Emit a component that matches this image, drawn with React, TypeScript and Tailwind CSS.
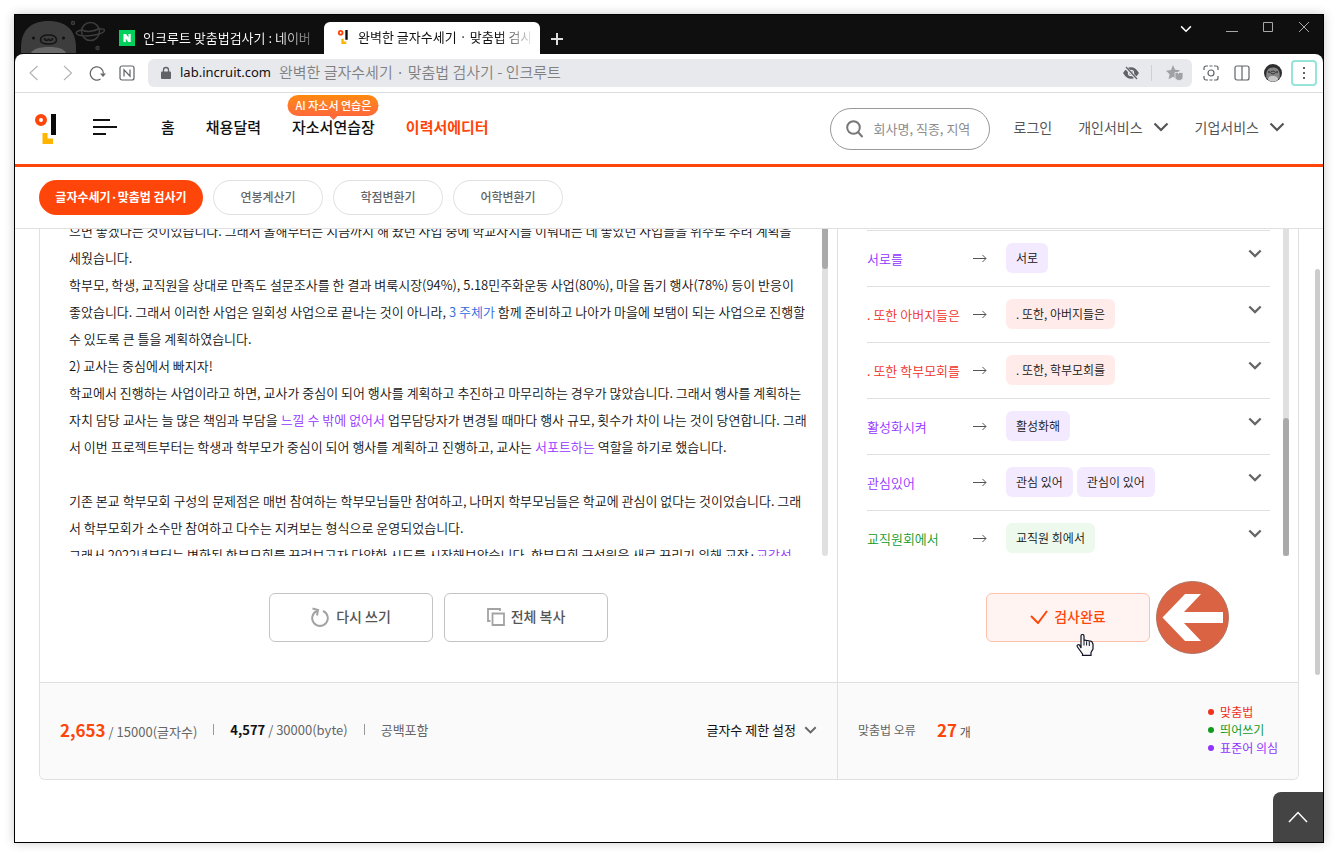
import React from "react";

type Tone = "red" | "purple" | "green";

const wordTone: Record<Tone, string> = {
  red: "text-[#f0311f]",
  purple: "text-[#9333ff]",
  green: "text-[#109a1e]",
};

const chipTone: Record<Tone, string> = {
  red: "bg-[#ffebe9]",
  purple: "bg-[#f3eaff]",
  green: "bg-[#edf9ec]",
};

const dotTone: Record<Tone, string> = {
  red: "bg-[#f0311f]",
  purple: "bg-[#9333ff]",
  green: "bg-[#109a1e]",
};

const corrections: { word: string; tone: Tone; fixes: string[] }[] = [
  { word: "서로를", tone: "purple", fixes: ["서로"] },
  { word: ". 또한 아버지들은", tone: "red", fixes: [". 또한, 아버지들은"] },
  { word: ". 또한 학부모회를", tone: "red", fixes: [". 또한, 학부모회를"] },
  { word: "활성화시켜", tone: "purple", fixes: ["활성화해"] },
  { word: "관심있어", tone: "purple", fixes: ["관심 있어", "관심이 있어"] },
  { word: "교직원회에서", tone: "green", fixes: ["교직원 회에서"] },
];

const legend: { label: string; tone: Tone }[] = [
  { label: "맞춤법", tone: "red" },
  { label: "띄어쓰기", tone: "green" },
  { label: "표준어 의심", tone: "purple" },
];

const essay: React.ReactNode[] = [
  "으면 좋겠다는 것이었습니다. 그래서 올해부터는 지금까지 해 왔던 사업 중에 학교자치를 이뤄내는 데 좋았던 사업들을 위주로 추려 계획을",
  "세웠습니다.",
  "학부모, 학생, 교직원을 상대로 만족도 설문조사를 한 결과 벼룩시장(94%), 5.18민주화운동 사업(80%), 마을 돕기 행사(78%) 등이 반응이",
  <>
    좋았습니다. 그래서 이러한 사업은 일회성 사업으로 끝나는 것이 아니라, <span className="text-[#2f6be0]">3 주체가</span> 함께
    준비하고 나아가 마을에 보탬이 되는 사업으로 진행할
  </>,
  "수 있도록 큰 틀을 계획하였습니다.",
  "2) 교사는 중심에서 빠지자!",
  "학교에서 진행하는 사업이라고 하면, 교사가 중심이 되어 행사를 계획하고 추진하고 마무리하는 경우가 많았습니다. 그래서 행사를 계획하는",
  <>
    자치 담당 교사는 늘 많은 책임과 부담을 <span className="text-[#9333ff]">느낄 수 밖에 없어서</span> 업무담당자가 변경될 때마다
    행사 규모, 횟수가 차이 나는 것이 당연합니다. 그래
  </>,
  <>
    서 이번 프로젝트부터는 학생과 학부모가 중심이 되어 행사를 계획하고 진행하고, 교사는{" "}
    <span className="text-[#9333ff]">서포트하는</span> 역할을 하기로 했습니다.
  </>,
  "\u00a0",
  "기존 본교 학부모회 구성의 문제점은 매번 참여하는 학부모님들만 참여하고, 나머지 학부모님들은 학교에 관심이 없다는 것이었습니다. 그래",
  "서 학부모회가 소수만 참여하고 다수는 지켜보는 형식으로 운영되었습니다.",
  <>
    그래서 2022년부터는 변화된 학부모회를 꾸려보고자 다양한 시도를 시작해보았습니다. 학부모회 구성원을 새로 꾸리기 위해 교장·
    <span className="text-[#9333ff]">교감선</span>
  </>,
];

function Chevron({ className, width = 2 }: { className: string; width?: number }) {
  return (
    <svg viewBox="0 0 16 10" className={className} fill="none" stroke="currentColor" strokeWidth={width} aria-hidden="true">
      <path d="M1.500 1.500 8 8l6.500-6.500" />
    </svg>
  );
}

function WhaleMascot() {
  return (
    <svg viewBox="0 0 92 38" className="h-[38px] w-[92px]" aria-hidden="true">
      <path d="M0 38V33C0 15 10 6 27.500 6S55 15 55 33v5z" fill="#3d3d3d" />
      <path d="M10 38c2-4 8-6 18-6s15 2 17 6z" fill="#6a6a6a" />
      <circle cx="12.500" cy="23" r="1.500" fill="#101010" />
      <circle cx="42.500" cy="23" r="1.500" fill="#101010" />
      <path
        d="M19.500 25c0-3 3-5 8-5s8 2 8 5-3 4-8 4-8-1-8-4zM23.500 23c0 3 4 3 4 .5 0 2.500 4 2.500 4-.5"
        fill="none"
        stroke="#151515"
        strokeWidth="1.500"
      />
      <g fill="none" stroke="#3d3d3d" strokeWidth="1.500">
        <circle cx="69.500" cy="16.500" r="9" />
        <path d="M60.500 15c-4 1-6 2-5 3.500 1 2 8 3 15 2s13-3 13-5-2-1.500-5-1.500" />
        <path d="M61 15c5 2.500 12 1.500 17-1.500" />
        <circle cx="52" cy="8" r="1.500" />
        <circle cx="76.500" cy="33" r="1.500" />
      </g>
    </svg>
  );
}

function IncruitMark({ className }: { className: string }) {
  return (
    <svg viewBox="0 0 22 30" className={className} aria-hidden="true">
      <circle cx="6" cy="6" r="4" fill="none" stroke="#ff460a" strokeWidth="4" />
      <path d="M16 0h5v21h-5z" fill="#0a0a0a" />
      <path d="M7.500 19h5v5.500H18V30H7.500z" fill="#ffb400" />
    </svg>
  );
}

function TitleBar() {
  return (
    <div className="flex h-[39px] items-stretch pl-[6px] text-[13px]">
      <WhaleMascot />
      <div className="flex w-[211px] items-center gap-2 pt-[6px] pl-[6px] text-white">
        <svg viewBox="0 0 16 16" className="mt-px size-4 shrink-0" aria-hidden="true">
          <path d="M0 0h16v16H0z" fill="#03cf5d" />
          <path d="M4.500 4h2.500l2.500 3.600V4h2.200v8H9.300L6.800 8.400V12H4.500z" fill="#fff" />
        </svg>
        <span className="w-[171px] overflow-hidden bg-linear-to-r from-white from-80% to-[#555] bg-clip-text whitespace-nowrap text-transparent">
          인크루트 맞춤법검사기 : 네이버
        </span>
      </div>
      <div className="mt-[7px] flex w-[216px] items-center gap-2 rounded-t-md bg-white pb-[2px] pl-3">
        <IncruitMark className="h-[14px] w-[14px] shrink-0" />
        <span className="w-[172px] overflow-hidden bg-linear-to-r from-[#111] from-80% to-[#ddd] bg-clip-text whitespace-nowrap text-transparent">
          완벽한 글자수세기 · 맞춤법 검사기
        </span>
      </div>
      <button type="button" aria-label="새 탭" className="ml-[10px] pt-2 text-[#ddd]">
        <svg viewBox="0 0 14 14" className="size-[14px]" stroke="currentColor" strokeWidth="2" aria-hidden="true">
          <path d="M7 1v12M1 7h12" />
        </svg>
      </button>
      <div className="ml-auto flex items-start gap-[34px] pt-[6px] pr-[13px] text-[#a8a8a8]">
        <button type="button" aria-label="탭 목록" className="pt-[4px] text-white">
          <Chevron className="h-2 w-3" />
        </button>
        <div className="flex items-start gap-6">
          <button type="button" aria-label="최소화" className="pt-[10px]">
            <svg viewBox="0 0 12 2" className="h-[2px] w-3" stroke="currentColor" aria-hidden="true">
              <path d="M0 .5h12" />
            </svg>
          </button>
          <button type="button" aria-label="최대화">
            <svg viewBox="0 0 12 12" className="size-3" fill="none" stroke="currentColor" aria-hidden="true">
              <path d="M1.500 1.500h9v9h-9z" />
            </svg>
          </button>
          <button type="button" aria-label="닫기">
            <svg viewBox="0 0 12 12" className="size-3" stroke="currentColor" aria-hidden="true">
              <path d="m1 1 10 10M11 1 1 11" />
            </svg>
          </button>
        </div>
      </div>
    </div>
  );
}

function Toolbar() {
  return (
    <div className="flex h-[39px] items-center rounded-t-lg border-b border-[#dadcdf] bg-white pr-[6px] pl-[14px]">
      <div className="flex items-center text-[#b5b5b5]">
        <button type="button" aria-label="뒤로">
          <svg viewBox="0 0 10 16" className="h-4 w-[10px]" fill="none" stroke="currentColor" strokeWidth="1.200" aria-hidden="true">
            <path d="M8.500 1 1 8l7.500 7" />
          </svg>
        </button>
        <button type="button" aria-label="앞으로" className="ml-6">
          <svg viewBox="0 0 10 16" className="h-4 w-[10px]" fill="none" stroke="currentColor" strokeWidth="1.200" aria-hidden="true">
            <path d="M1 1l7.500 7L1 15" />
          </svg>
        </button>
        <button type="button" aria-label="새로고침" className="ml-4 text-[#666]">
          <svg viewBox="0 0 18 16" className="h-4 w-[18px]" fill="none" stroke="currentColor" strokeWidth="1.300" aria-hidden="true">
            <path d="M11.500 14A6.600 6.600 0 1 1 14.500 8.500" />
            <path d="M11 8.500h6l-3 3.500z" fill="currentColor" stroke="none" />
          </svg>
        </button>
        <button type="button" aria-label="네이버 홈" className="ml-3 text-[#5f6368]">
          <svg viewBox="0 0 16 16" className="size-4" fill="none" stroke="currentColor" strokeWidth="1.200" aria-hidden="true">
            <rect x="1" y="1" width="14" height="14" rx="2" />
            <path d="M5 11.500V4.800l6 6.400V4.500" />
          </svg>
        </button>
      </div>
      <div className="ml-[13px] flex h-7 flex-1 items-center rounded-md bg-[#e8e9ed] pr-2 pl-3">
        <svg viewBox="0 0 12 14" className="h-[14px] w-3" aria-hidden="true">
          <rect x="1" y="5.500" width="10" height="7.500" rx="1" fill="#5f6368" />
          <path d="M3.500 6V4a2.500 2.500 0 0 1 5 0v2" fill="none" stroke="#5f6368" strokeWidth="1.300" />
        </svg>
        <input
          id="address"
          type="text"
          readOnly
          value="lab.incruit.com"
          className="ml-2 field-sizing-content font-[Noto_Sans,sans-serif] text-[13px] text-[#111] outline-none"
        />
        <label htmlFor="address" className="ml-2 pb-[2px] text-[15px] font-[350] whitespace-nowrap text-[#808080]">
          완벽한 글자수세기 · 맞춤법 검사기 - 인크루트
        </label>
        <div className="ml-auto flex items-center">
          <svg viewBox="0 0 16 14" className="h-[14px] w-4" fill="none" stroke="#5f6368" strokeWidth="1.500" aria-hidden="true">
            <path d="M1 7c2-3.300 4.300-5 7-5s5 1.700 7 5c-2 3.300-4.300 5-7 5S3 10.300 1 7z" fill="#5f6368" />
            <circle cx="8" cy="7" r="2.600" stroke="#e8e9ed" strokeWidth="1.200" />
            <path d="m2 1 12 12" stroke="#e8e9ed" strokeWidth="3" />
            <path d="m3 1 11 12" strokeWidth="1.200" />
          </svg>
          <span className="mx-3 h-4 w-px bg-[#cfd0d4]" />
          <svg viewBox="0 0 18 16" className="ml-[2px] h-4 w-[18px]" fill="#a0a1a4" aria-hidden="true">
            <path d="m7 0 2.100 4.700 5 .5-3.700 3.400V14L7 11.800 2.600 14.300l1-5L0 5.700l5-.7z" />
            <path d="M9 7.500h2.500l1 1 1-1H17V12c0 2-1.500 3.500-4 3.500S9 14 9 12z" stroke="#e8e9ed" strokeWidth=".8" />
          </svg>
        </div>
      </div>
      <div className="flex items-center text-[#5f6368]">
        <button type="button" aria-label="캡처" className="ml-[11px]">
          <svg viewBox="0 0 16 16" className="size-4" fill="none" stroke="currentColor" strokeWidth="1.200" aria-hidden="true">
            <path d="M1 5V3a2 2 0 0 1 2-2h2M6.500 1h3M11 1h2a2 2 0 0 1 2 2v2M15 11v2a2 2 0 0 1-2 2h-2M9.500 15h-3M5 15H3a2 2 0 0 1-2-2v-2" />
            <circle cx="8" cy="8" r="3" />
          </svg>
        </button>
        <button type="button" aria-label="분할 보기" className="ml-[15px]">
          <svg viewBox="0 0 16 16" className="size-4" fill="none" stroke="currentColor" strokeWidth="1.200" aria-hidden="true">
            <rect x="1" y="1" width="14" height="14" rx="2" />
            <path d="M8 1v14" />
          </svg>
        </button>
        <button type="button" aria-label="프로필" className="ml-[14px]">
          <svg viewBox="0 0 18 18" className="size-[18px]" aria-hidden="true">
            <circle cx="9" cy="9" r="9" fill="#2e2e2e" />
            <path d="M2.500 14C1.500 7 4 3.500 9 3.500S16.500 7 15.500 14a9 9 0 0 1-13 0z" fill="#858585" />
            <path d="M4 16c0-3 2-4 5-4s5 1 5 4a9 9 0 0 1-10 0z" fill="#c8c8c8" />
            <circle cx="5" cy="8" r=".8" />
            <circle cx="13" cy="8" r=".8" />
            <ellipse cx="9" cy="8.500" rx="2.300" ry="1.400" fill="none" stroke="#222" strokeWidth=".8" />
          </svg>
        </button>
        <button type="button" aria-label="메뉴" className="ml-[9px] flex size-[26px] items-center justify-center rounded border-2 border-[#97e5da]">
          <svg viewBox="0 0 4 14" className="h-[14px] w-1" fill="currentColor" aria-hidden="true">
            <path d="M1 1h2v2H1zM1 6h2v2H1zM1 11h2v2H1z" />
          </svg>
        </button>
      </div>
    </div>
  );
}

function SiteHeader() {
  return (
    <header className="flex h-[74px] items-center border-b-[3px] border-[#ff460a] pr-[38px] pl-5">
      <a href="#home" aria-label="인크루트">
        <IncruitMark className="h-[30px] w-[22px]" />
      </a>
      <button type="button" aria-label="전체 메뉴" className="ml-9 pb-[3px]">
        <svg viewBox="0 0 24 18" className="h-[18px] w-6" stroke="#111" strokeWidth="2" aria-hidden="true">
          <path d="M0 2h17M0 9h24M0 16h13" />
        </svg>
      </button>
      <nav className="ml-11 flex items-center gap-[31px] pb-[2px] text-[15px] font-medium text-[#111]">
        <a href="#home">홈</a>
        <a href="#calendar">채용달력</a>
        <a href="#practice" className="relative">
          자소서연습장
          <span className="absolute bottom-[23px] left-1/2 flex h-[21px] w-[91px] -translate-x-1/2 items-center justify-center rounded-full bg-linear-to-b from-[#ff8a0a] to-[#ff6838] pb-px text-[11px] whitespace-nowrap text-white">
            AI 자소서 연습은
            <svg viewBox="0 0 8 4" className="absolute top-full left-1/2 h-1 w-2 -translate-x-1/2" aria-hidden="true">
              <path d="M0 0h8L4 4z" fill="#ff6838" />
            </svg>
          </span>
        </a>
        <a href="#editor" className="font-bold text-[#ff460a]">
          이력서에디터
        </a>
      </nav>
      <form className="mt-px ml-auto flex h-[42px] w-[160px] items-center rounded-full border border-[#999] pl-[15px]" onSubmit={(e) => e.preventDefault()}>
        <svg viewBox="0 0 18 18" className="size-[18px] shrink-0" fill="none" stroke="#777" strokeWidth="2" aria-hidden="true">
          <circle cx="7.500" cy="7.500" r="6.300" />
          <path d="m12 12 4.500 5" />
        </svg>
        <input
          type="search"
          aria-label="검색"
          placeholder="회사명, 직종, 지역"
          className="ml-[10px] min-w-0 flex-1 pb-px text-[13px] outline-none placeholder:text-[#8c8c8c]"
        />
      </form>
      <nav className="ml-6 flex items-center gap-[26px] pb-[3px] text-[14px] text-[#555]">
        <a href="#login">로그인</a>
        <button type="button" className="flex items-center gap-[10px]">
          개인서비스
          <Chevron className="h-[10px] w-4" width={2.2} />
        </button>
        <button type="button" className="flex items-center gap-[10px]">
          기업서비스
          <Chevron className="h-[10px] w-4" width={2.2} />
        </button>
      </nav>
    </header>
  );
}

function SubNav() {
  const others = ["연봉계산기", "학점변환기", "어학변환기"];
  return (
    <nav className="flex h-[62px] items-center gap-[10px] border-b border-[#e0e0e0] px-6 text-[12px]">
      <a href="#count" className="flex h-[35px] w-[164px] items-center justify-center rounded-full bg-[#ff460a] pb-[2px] font-bold text-white">
        글자수세기·맞춤법 검사기
      </a>
      {others.map((name) => (
        <a
          key={name}
          href={`#${name}`}
          className="flex h-[35px] w-[110px] items-center justify-center rounded-full border border-[#e0e0e0] pb-[2px] font-medium text-[#666]"
        >
          {name}
        </a>
      ))}
    </nav>
  );
}

function EditorPanel() {
  return (
    <section className="flex min-w-0 flex-1 flex-col">
      <div className="flex h-[327px] pr-[9px] pl-[29px]">
        <div className="min-w-0 flex-1 overflow-hidden">
          <div className="-mt-3 text-[13px] leading-[27px] font-[350] whitespace-nowrap text-[#111]">
            {essay.map((line, i) => (
              <p key={i}>{line}</p>
            ))}
          </div>
        </div>
        <div className="w-[6px] rounded-b bg-[#e0e0e0]">
          <div className="h-10 rounded-b bg-[#aaa]" />
        </div>
      </div>
      <div className="flex justify-center gap-[11px] pt-[37px] pb-10 text-[14px] font-medium text-[#555]">
        <button type="button" className="flex h-[49px] w-[164px] items-center justify-center gap-[7px] rounded-md border border-[#c4c4c4] pb-[2px]">
          <svg viewBox="0 0 18 20" className="h-5 w-[18px]" fill="none" stroke="#a3a3a3" strokeWidth="2" aria-hidden="true">
            <path d="M12 4a7.800 7.800 0 1 1-6 0" />
            <path d="M1.500 1.500 7 3l-1 5.500" />
          </svg>
          다시 쓰기
        </button>
        <button type="button" className="flex h-[49px] w-[164px] items-center justify-center gap-[6px] rounded-md border border-[#c4c4c4] pb-[2px]">
          <svg viewBox="0 0 18 18" className="size-[18px]" fill="none" stroke="#a3a3a3" strokeWidth="1.800" aria-hidden="true">
            <path d="M3.500 13H1V1h12v2" />
            <path d="M5.500 5.500H17V17H5.500z" />
          </svg>
          전체 복사
        </button>
      </div>
      <div className="flex h-[97px] items-center border-t border-[#e0e0e0] bg-[#fafafa] px-5 pb-[3px] text-[13px] text-[#666]">
        <p>
          <strong className="text-[17px] text-[#ff460a]">2,653</strong> / 15000(글자수)
        </p>
        <span className="mx-4 h-[11px] w-px bg-[#999]" />
        <p>
          <strong className="text-[#111]">4,577</strong> / 30000(byte)
        </p>
        <span className="mx-4 h-[11px] w-px bg-[#999]" />
        <p>공백포함</p>
        <button type="button" className="ml-auto flex items-center gap-2 text-[#111]">
          글자수 제한 설정
          <Chevron className="h-2 w-[13px] text-[#666]" width={2.4} />
        </button>
      </div>
    </section>
  );
}

function ResultPanel() {
  return (
    <section className="flex w-[461px] flex-col border-l border-[#e0e0e0]">
      <div className="flex h-[327px] pr-[9px] pl-[29px]">
        <ul className="min-w-0 flex-1 overflow-hidden pt-px">
          {corrections.map((item) => (
            <li key={item.word} className="flex h-14 items-start border-t border-[#e0e0e0] pt-3 pr-2">
              <span className={`w-[106px] text-[13px] leading-[32px] font-[350] whitespace-nowrap ${wordTone[item.tone]}`}>
                {item.word}
              </span>
              <svg viewBox="0 0 14 8" className="mt-[11px] h-2 w-[14px]" fill="none" stroke="#555" aria-hidden="true">
                <path d="M0 4.500h13M9.500 1 13 4.500 9.500 8" />
              </svg>
              <span className="ml-[19px] flex gap-1">
                {item.fixes.map((fix) => (
                  <button
                    key={fix}
                    type="button"
                    className={`h-[30px] rounded-md px-[10px] text-[12px] font-[350] whitespace-nowrap text-[#111] ${chipTone[item.tone]}`}
                  >
                    {fix}
                  </button>
                ))}
              </span>
              <button type="button" aria-label={`${item.word} 자세히`} className="mt-[6px] ml-auto text-[#666]">
                <Chevron className="h-[9px] w-[14px]" width={2.6} />
              </button>
            </li>
          ))}
        </ul>
        <div className="ml-[13px] flex w-[6px] flex-col justify-end bg-[#e0e0e0]">
          <div className="h-[138px] rounded-full bg-[#aaa]" />
        </div>
      </div>
      <div className="flex justify-center pt-[37px] pb-10">
        <div className="relative">
          <button
            type="button"
            className="flex h-[49px] w-[164px] items-center justify-center gap-[6px] rounded-md border border-[#ffc0ac] bg-[#fff4f1] pb-[2px] text-[14px] font-medium text-[#ff460a]"
          >
            <svg viewBox="0 0 18 14" className="h-[14px] w-[18px]" fill="none" stroke="currentColor" strokeWidth="2" aria-hidden="true">
              <path d="m1 6 7 7L17 1" />
            </svg>
            검사완료
          </button>
          <svg viewBox="0 0 73 73" className="absolute -top-3 left-[170px] size-[73px]" aria-hidden="true">
            <circle cx="36.500" cy="36.500" r="36" fill="#da6343" stroke="#b07060" />
            <path d="M6.500 36.500 29 13h16L28 31h39v11H28l17 18H29z" fill="#fff" />
          </svg>
          <svg viewBox="0 0 18 22" className="absolute top-[41px] left-[90px] h-[22px] w-[18px]" aria-hidden="true">
            <path
              d="M5 14V2c0-2 3-2 3 0v5c0-1.300 2.600-1.300 2.600.3 0-1.300 2.700-1 2.700.5 0-1.200 2.900-1 2.900.8L17 10v5l-2 3.500V21.400H6.500V20L1.500 13c-1.200-2 .8-3 2-2z"
              fill="#f8f8f8"
              stroke="#111126"
              strokeWidth="1.200"
            />
            <path d="M8 7v4.500M10.600 7.500v4M13.300 8v4" stroke="#111126" />
          </svg>
        </div>
      </div>
      <div className="flex h-[97px] items-center border-t border-[#e0e0e0] bg-[#fafafa] px-5 pb-[3px] text-[12px] text-[#555]">
        <p className="text-[#666]">맞춤법 오류</p>
        <p className="ml-[21px]">
          <strong className="text-[17px] text-[#ff460a]">27</strong> 개
        </p>
        <ul className="ml-auto leading-[18px]">
          {legend.map((entry) => (
            <li key={entry.label} className={`flex items-center gap-[6px] ${wordTone[entry.tone]}`}>
              <span className={`size-[6px] rounded-full ${dotTone[entry.tone]}`} />
              {entry.label}
            </li>
          ))}
        </ul>
      </div>
    </section>
  );
}

export default function App() {
  return (
    <div className="min-h-screen bg-white pt-[14px] pr-[13px] pb-[11px] pl-[14px] font-[Noto_Sans_CJK_KR,sans-serif]">
      <div className="relative overflow-hidden border border-black bg-[#0f0f0f] shadow-[0_0_10px_rgba(0,0,0,0.2)]">
        <TitleBar />
        <Toolbar />
        <div className="bg-white">
          <SiteHeader />
          <SubNav />
          <main className="flex pr-[3px] pb-[62px] pl-6">
            <div className="flex min-w-0 flex-1 overflow-hidden rounded-b-md border border-t-0 border-[#e0e0e0]">
              <EditorPanel />
              <ResultPanel />
            </div>
            <div className="ml-4 w-[5px] pt-10">
              <div className="h-[406px] rounded-full bg-[#ccc]" />
            </div>
          </main>
        </div>
        <button type="button" aria-label="맨 위로" className="absolute right-0 bottom-0 flex size-[50px] items-center justify-center rounded-tl-lg bg-[#444] text-white">
          <svg viewBox="0 0 20 12" className="h-3 w-5" fill="none" stroke="currentColor" strokeWidth="1.500" aria-hidden="true">
            <path d="m1 11 9-9.500 9 9.500" />
          </svg>
        </button>
      </div>
    </div>
  );
}
